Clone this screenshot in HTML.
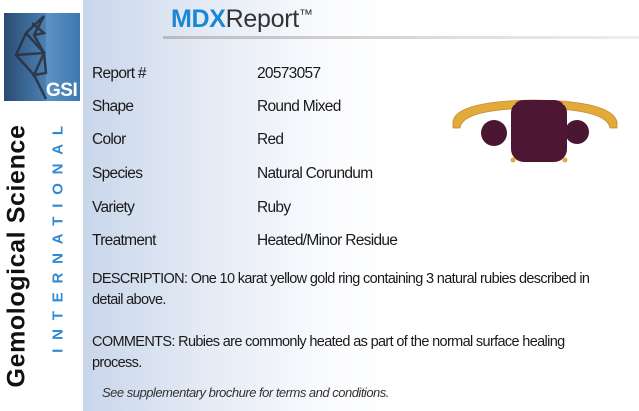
<!DOCTYPE html>
<html><head><style>
*{margin:0;padding:0;box-sizing:border-box}
body{width:639px;height:411px;overflow:hidden;background:#fff;font-family:"Liberation Sans",Arial,sans-serif;position:relative;color:#1a1a1a}
#panel{position:absolute;left:83px;top:0;width:556px;height:411px;background:linear-gradient(90deg,#c9d6ea 0%,#e4ebf5 22%,#fbfcfe 45%,#fff 60%)}
.t{position:absolute;font-size:15.5px;letter-spacing:-0.7px;white-space:nowrap}
.p{position:absolute;font-size:14.5px;letter-spacing:-0.65px;line-height:21px;white-space:nowrap}
#logo{position:absolute;left:4px;top:13px;width:76px;height:88px;background:linear-gradient(90deg,#2a4c72,#4a80b5 55%,#5c93c6 55%,#3f78b0)}
</style></head><body>
<div id="panel"></div>
<div id="logo">
<svg width="76" height="88" viewBox="0 0 76 88">
<g stroke="#2a2f3a" stroke-width="2.5" fill="none" opacity="0.85">
<path d="M40 3 L22 20 L12 42 L30 62 L42 86"/>
<path d="M40 3 L30 22 L40 40 L22 20"/>
<path d="M12 42 L40 40 L30 62 L42 60 L40 40"/>
<path d="M28 10 L40 20 L30 22"/>
</g>
<text x="42" y="83" font-family="Liberation Sans" font-weight="bold" font-size="19" fill="#fff" letter-spacing="-0.5">GSI</text>
</svg>
</div>
<div style="position:absolute;left:17px;top:256px;transform:translate(-50%,-50%) rotate(-90deg);font-size:25px;font-weight:bold;letter-spacing:0.6px;white-space:nowrap;color:#111">Gemological Science</div>
<div style="position:absolute;left:58px;top:235px;transform:translate(-50%,-50%) rotate(-90deg);font-size:15px;font-weight:bold;letter-spacing:8.8px;white-space:nowrap;color:#2f8ad3">INTERNATIONAL</div>
<div style="position:absolute;left:171px;top:5px;font-size:25px;white-space:nowrap;letter-spacing:-0.3px"><span style="color:#1d86d4;font-weight:bold">MDX</span><span style="color:#333">Report</span><span style="color:#333;font-size:14px;vertical-align:8px">™</span></div>
<div style="position:absolute;left:163px;top:36px;width:476px;height:3px;background:linear-gradient(90deg,#bbb,#ddd 60%,#eee)"></div>
<div class="t" style="left:92px;top:65px">Report #</div><div class="t" style="left:257px;top:65px">20573057</div>
<div class="t" style="left:92px;top:98px">Shape</div><div class="t" style="left:257px;top:98px">Round Mixed</div>
<div class="t" style="left:92px;top:131px">Color</div><div class="t" style="left:257px;top:131px">Red</div>
<div class="t" style="left:92px;top:165px">Species</div><div class="t" style="left:257px;top:165px">Natural Corundum</div>
<div class="t" style="left:92px;top:199px">Variety</div><div class="t" style="left:257px;top:199px">Ruby</div>
<div class="t" style="left:92px;top:232px">Treatment</div><div class="t" style="left:257px;top:232px">Heated/Minor Residue</div>
<div class="p" style="left:92px;top:269px">DESCRIPTION: One 10 karat yellow gold ring containing 3 natural rubies described in<br>detail above.</div>
<div class="p" style="left:92px;top:332px">COMMENTS: Rubies are commonly heated as part of the normal surface healing<br>process.</div>
<div style="position:absolute;left:102px;top:385px;font-size:13px;font-style:italic;letter-spacing:-0.5px;color:#333;white-space:nowrap">See supplementary brochure for terms and conditions.</div>
<svg style="position:absolute;left:0;top:0" width="639" height="411">
<path d="M453 122 Q455 101 535 100 Q612 101 617 122 L617 128 L610 128 Q607 109 535 108 Q462 109 460 128 L453 128 Z" fill="#e2aa3a" stroke="#c08a22" stroke-width="0.8"/>
<circle cx="494" cy="133" r="13" fill="#4a1632"/>
<circle cx="577" cy="132" r="12" fill="#4a1632"/>
<rect x="511" y="100" width="56" height="62" rx="13" fill="#4d1632"/>
<circle cx="513" cy="103" r="2.5" fill="#e2aa3a"/><circle cx="565" cy="103" r="2.5" fill="#e2aa3a"/>
<circle cx="513" cy="160" r="2.5" fill="#e2aa3a"/><circle cx="565" cy="160" r="2.5" fill="#e2aa3a"/>
</svg>
</body></html>
